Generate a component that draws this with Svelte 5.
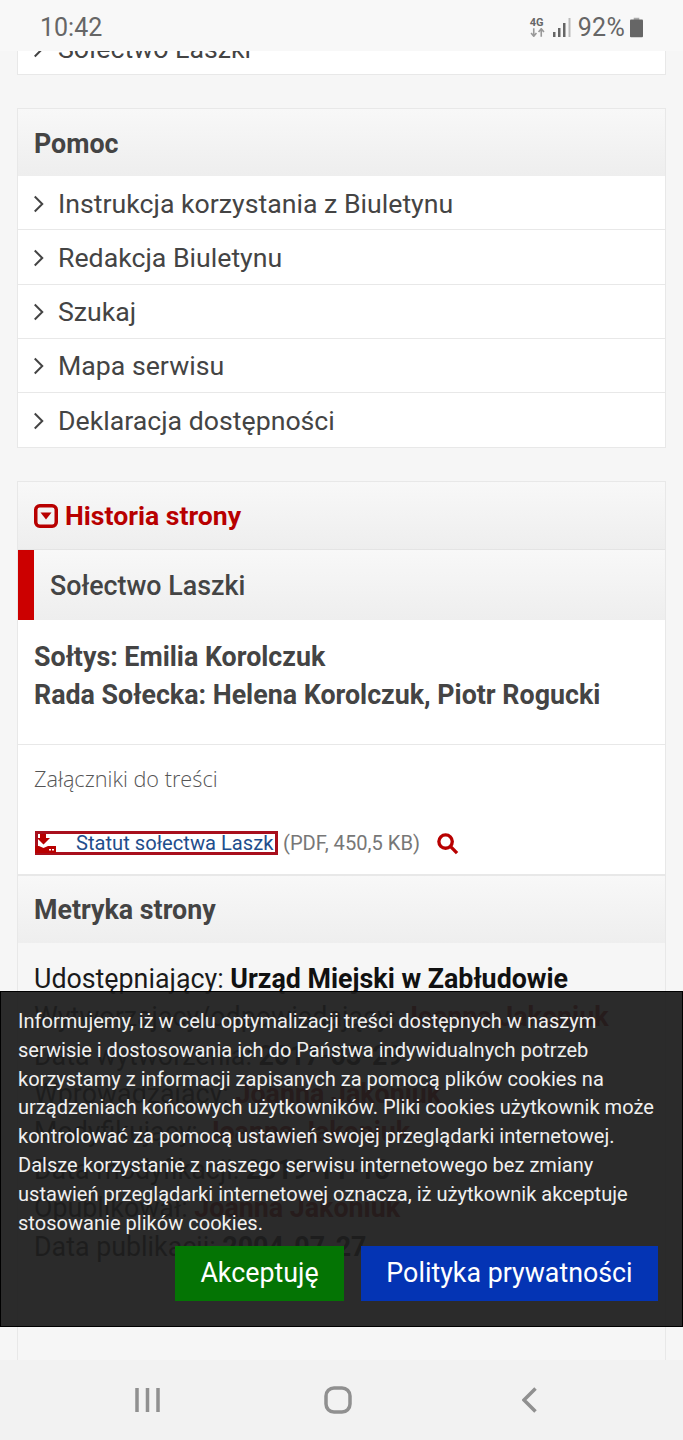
<script>
  const help = [
    'Instrukcja korzystania z Biuletynu',
    'Redakcja Biuletynu',
    'Szukaj',
    'Mapa serwisu',
    'Deklaracja dostępności'
  ]
  const metrics = [
    { label: 'Udostępniający:', value: 'Urząd Miejski w Zabłudowie' },
    { label: 'Wytworzający/odpowiadający:', value: 'Joanna Jakoniuk', link: true },
    { label: 'Data wytworzenia:', value: '2017-03-29' },
    { label: 'Wprowadzający:', value: 'Joanna Jakoniuk', link: true },
    { label: 'Modyfikujący:', value: 'Joanna Jakoniuk', link: true },
    { label: 'Data modyfikacji:', value: '2019-11-18' },
    { label: 'Opublikował:', value: 'Joanna Jakoniuk', link: true },
    { label: 'Data publikacji:', value: '2004-07-27' }
  ]
</script>

<div class="screen">
  <main class="page">
    <section class="card first">
      <a class="item last">
        <svg class="chev" viewBox="0 0 10 16"><path d="M2 2l6 6-6 6" /></svg>
        Sołectwo Laszki
      </a>
    </section>

    <section class="card">
      <h2 class="head">Pomoc</h2>
      {#each help as item, i}
        <a class="item" class:last={i === help.length - 1}>
          <svg class="chev" viewBox="0 0 10 16"><path d="M2 2l6 6-6 6" /></svg>
          {item}
        </a>
      {/each}
    </section>

    <section class="card tall">
      <h2 class="head history">
        <svg class="toggle" viewBox="0 0 24 24">
          <rect x="1.750" y="1.750" width="20.500" height="20.500" rx="4" />
          <path d="M6.500 8.500h11L12 15.500z" />
        </svg>
        Historia strony
      </h2>
      <div class="version">Sołectwo Laszki</div>
      <div class="body">
        <p>Sołtys: Emilia Korolczuk</p>
        <p>Rada Sołecka: Helena Korolczuk, Piotr Rogucki</p>
      </div>
      <div class="files">
        <div class="files-title">Załączniki do treści</div>
        <div class="file">
          <a class="file-link">
            <svg class="dl" viewBox="0 0 21 19">
              <path d="M5 0h6v4h4l-6.500 6.500L2 4h3z" />
              <path fill-rule="evenodd" d="M0 12h4l4.500 2 4.500-2h8v7H0zM14 15v1.500h2V15zM17 15v1.500h2V15z" />
            </svg>
            Statut sołectwa Laszk
          </a>
          <span class="meta">(PDF, 450,5 KB)</span>
          <svg class="zoom" viewBox="0 0 24 24">
            <circle cx="10" cy="10" r="7" />
            <path d="M15 15l7 7" />
          </svg>
        </div>
      </div>
      <h2 class="head metric-head">Metryka strony</h2>
      <div class="metrics">
        {#each metrics as m}
          <div class="metric">{m.label} <b class:link={m.link}>{m.value}</b></div>
        {/each}
      </div>
    </section>
  </main>

  <header class="status">
    <span class="time">10:42</span>
    <div class="status-right">
      <span class="net">
        <span class="net-g">4G</span>
        <svg viewBox="0 0 14 8"><path d="M3.500 0v7M1 4.500l2.500 3 2.500-3" /><path d="M10.500 8V1M8 3.500l2.500-3 2.500 3" /></svg>
      </span>
      <svg class="bars" viewBox="0 0 18 19">
        <rect x="0" y="14" width="2.500" height="5" />
        <rect x="5" y="10" width="2.500" height="9" />
        <rect x="10" y="5" width="2.500" height="14" />
        <rect class="off" x="15.500" y="0" width="2" height="19" />
      </svg>
      <span class="pct">92%</span>
      <svg class="batt" viewBox="0 0 14 21">
        <rect class="cap" x="4" y="0" width="6" height="3" />
        <rect x="0" y="2" width="14" height="19" rx="1" />
      </svg>
    </div>
  </header>

  <aside class="cookies">
    <p>Informujemy, iż w celu optymalizacji treści dostępnych w naszym serwisie i dostosowania ich do Państwa indywidualnych potrzeb korzystamy z informacji zapisanych za pomocą plików cookies na urządzeniach końcowych użytkowników. Pliki cookies użytkownik może kontrolować za pomocą ustawień swojej przeglądarki internetowej. Dalsze korzystanie z naszego serwisu internetowego bez zmiany ustawień przeglądarki internetowej oznacza, iż użytkownik akceptuje stosowanie plików cookies.</p>
    <div class="actions">
      <button class="accept">Akceptuję</button>
      <button class="policy">Polityka prywatności</button>
    </div>
  </aside>

  <nav class="softkeys">
    <svg class="key recent" viewBox="0 0 25 26"><path d="M2 1v24M12.500 1v24M23 1v24" /></svg>
    <svg class="key home" viewBox="0 0 28 28"><rect x="2" y="2" width="24" height="24" rx="8" /></svg>
    <svg class="key back" viewBox="0 0 15 26"><path d="M13.500 1.500L2 13l11.500 11.500" /></svg>
  </nav>
</div>

<style>
  :global(body) {
    background: #f6f6f6;
  }

  .screen {
    position: relative;
    width: 683px;
    height: 1440px;
    overflow: hidden;
    background: #f6f6f6;
    font-family: Roboto, "Liberation Sans", sans-serif;
    color: #444;
  }

  .page {
    display: flex;
    flex-direction: column;
    gap: 33px;
    padding: 0 17px;
  }

  .card {
    border: 1px solid #e8e8e8;
    background: #fff;
  }

  .card.first {
    border-top: 0;
    padding-top: 21px;
  }

  .card.tall {
    display: flex;
    flex-direction: column;
    height: 900px;
  }

  .head {
    display: flex;
    align-items: center;
    gap: 7px;
    flex: none;
    height: 67px;
    margin: 0;
    padding: 2px 16px 0;
    box-sizing: border-box;
    font-size: 26.800px;
    font-weight: 700;
    color: #444;
    background: linear-gradient(#f8f8f8, #eeeeee);
  }

  .metric-head {
    padding-top: 0;
  }

  .item {
    display: flex;
    align-items: center;
    gap: 13px;
    height: 54.250px;
    box-sizing: border-box;
    padding: 2px 14px 0;
    border-bottom: 1px solid #e8e8e8;
    font-size: 26.700px;
    color: #444;
  }

  .first .item {
    height: 53px;
  }

  .item.last {
    border-bottom: 0;
  }

  .chev {
    width: 13px;
    height: 20px;
    fill: none;
    stroke: #444;
    stroke-width: 1.600;
  }

  .history {
    height: 68px;
    padding-top: 0;
    font-size: 26.600px;
    color: #b80000;
    border-bottom: 1px solid #e4e4e4;
  }

  .toggle {
    width: 24px;
    height: 24px;
    flex: none;
  }

  .toggle rect {
    fill: none;
    stroke: #b80000;
    stroke-width: 3.500;
  }

  .toggle path {
    fill: #b80000;
  }

  .version {
    display: flex;
    align-items: center;
    flex: none;
    height: 70px;
    box-sizing: border-box;
    padding: 1px 0 0 16px;
    border-left: 16px solid #cc0000;
    font-size: 26.800px;
    font-weight: 500;
    background: linear-gradient(#f8f8f8, #eeeeee);
  }

  .body {
    height: 125px;
    flex: none;
    padding-top: 18px;
    padding-left: 16px;
    border-bottom: 1px solid #e8e8e8;
    box-sizing: border-box;
    font-size: 26.800px;
    font-weight: 700;
  }

  .body p {
    margin: 0;
    line-height: 38px;
  }

  .files {
    height: 131px;
    flex: none;
    padding: 19px 16px 0;
    box-sizing: border-box;
    border-bottom: 2px solid #e8e8e8;
  }

  .files-title {
    font-family: "Open Sans", sans-serif;
    font-size: 21.700px;
    font-weight: 300;
    line-height: 30px;
    color: #555;
  }

  .file {
    display: flex;
    align-items: center;
    margin-top: 37px;
    margin-left: 1px;
    font-size: 20.150px;
  }

  .file-link {
    display: flex;
    align-items: center;
    width: 243px;
    height: 24px;
    box-sizing: border-box;
    border: 3px solid #a80f1c;
    white-space: nowrap;
    color: #1f4e8c;
  }

  .dl {
    flex: none;
    width: 21px;
    height: 19px;
    margin-left: -3px;
    margin-right: 20px;
    fill: #b80000;
  }

  .meta {
    margin-left: 5px;
    color: #777;
  }

  .zoom {
    width: 23px;
    height: 23px;
    margin-left: 16px;
    fill: none;
    stroke: #b80000;
    stroke-width: 3.500;
  }

  .metrics {
    flex: 1;
    padding: 17px 16px 0;
    background: #f6f6f6;
  }

  .metric {
    font-size: 26.800px;
    line-height: 38.200px;
    color: #1a1a1a;
    white-space: nowrap;
  }

  .metric b {
    color: #111;
  }

  .metric b.link {
    color: #a00000;
  }

  .status {
    position: absolute;
    top: 0;
    left: 0;
    right: 0;
    height: 51px;
    display: flex;
    align-items: center;
    justify-content: space-between;
    padding: 3px 40px 0 40px;
    background: #f8f8f8;
    color: #666;
    font-size: 25px;
    box-sizing: border-box;
  }

  .status-right {
    display: flex;
    align-items: center;
  }

  .net {
    display: flex;
    flex-direction: column;
    width: 15px;
    margin-right: 8px;
  }

  .net-g {
    font-size: 11px;
    font-weight: 700;
    line-height: 11px;
  }

  .net svg {
    width: 15px;
    height: 9px;
    fill: none;
    stroke: #999;
    stroke-width: 1.500;
  }

  .bars {
    width: 18px;
    height: 19px;
    fill: #666;
  }

  .bars .off {
    fill: #bbb;
  }

  .pct {
    margin-left: 7px;
    letter-spacing: 0.300px;
  }

  .batt {
    width: 13px;
    height: 21px;
    margin-left: 5px;
    fill: #666;
  }

  .batt .cap {
    fill: #aaa;
  }

  .cookies {
    position: absolute;
    top: 991px;
    left: 0;
    width: 683px;
    height: 336px;
    box-sizing: border-box;
    padding: 15px 18px 0 17px;
    border: 1px solid #000;
    background: rgba(30, 30, 30, 0.94);
    color: #f0f0f0;
  }

  .cookies p {
    margin: 0;
    font-size: 20.070px;
    line-height: 28.800px;
  }

  .actions {
    display: flex;
    justify-content: flex-end;
    gap: 17px;
    margin-top: 8.500px;
    margin-right: 6px;
  }

  .actions button {
    height: 55px;
    border: 0;
    font-family: inherit;
    font-size: 26.800px;
    color: #fff;
  }

  .accept {
    width: 169px;
    background: #047404;
  }

  .policy {
    width: 297px;
    background: #0434b4;
  }

  .softkeys {
    position: absolute;
    left: 0;
    right: 0;
    bottom: 0;
    height: 80px;
    display: flex;
    align-items: center;
    gap: 164px;
    padding-left: 135px;
    background: #f2f2f2;
  }

  .key {
    fill: none;
    stroke: #909090;
    stroke-width: 3.500;
  }

  .recent {
    width: 25px;
    height: 26px;
  }

  .home {
    width: 28px;
    height: 28px;
  }

  .back {
    width: 15px;
    height: 26px;
    margin-left: 6px;
  }
</style>
